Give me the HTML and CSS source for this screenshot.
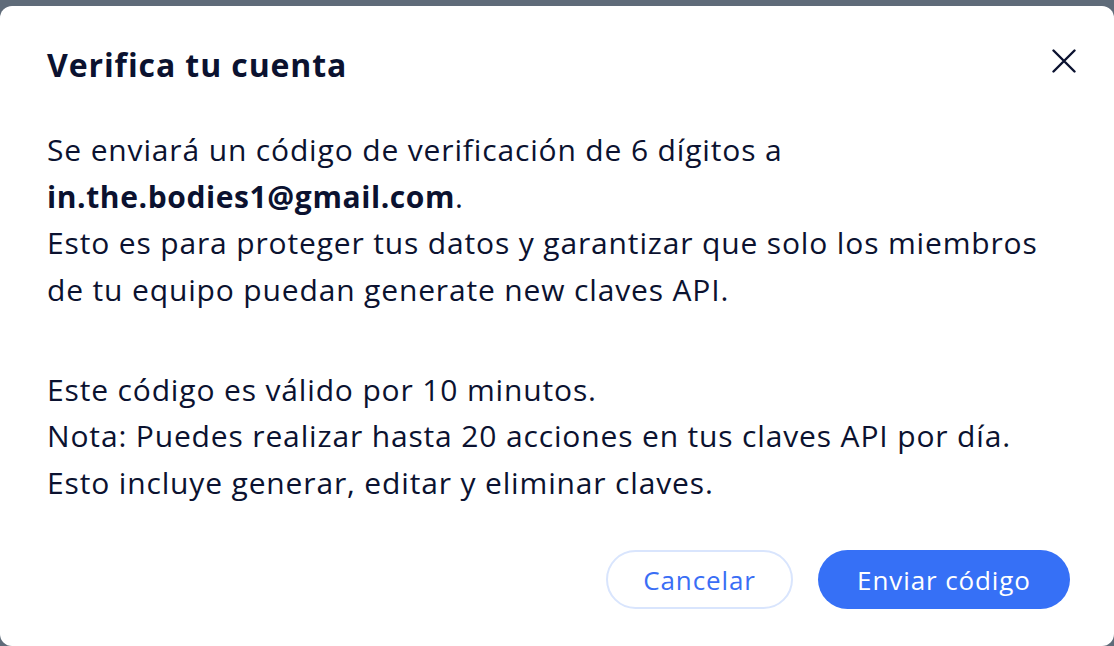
FILE: index.html
```html
<!DOCTYPE html>
<html lang="es">
<head>
<meta charset="utf-8">
<title>Verifica tu cuenta</title>
<link rel="stylesheet" href="styles.css">
</head>
<body>
<div class="backdrop">
  <div class="modal">
    <div class="modal-header">
      <h1 class="title">Verifica tu cuenta</h1>
      <button class="close" aria-label="Cerrar">
        <svg width="24" height="24" viewBox="0 0 24 24"><path d="M1.5 1.5 L22.5 22.5 M22.5 1.5 L1.5 22.5" stroke="#0b1230" stroke-width="2.4" stroke-linecap="round" fill="none"/></svg>
      </button>
    </div>
    <div class="modal-body">
      <p>Se enviará un código de verificación de 6 dígitos a<br><strong>in.the.bodies1@gmail.com</strong>.<br>Esto es para proteger tus datos y garantizar que solo los miembros<br>de tu equipo puedan generate new claves API.</p>
      <p>Este código es válido por 10 minutos.<br>Nota: Puedes realizar hasta 20 acciones en tus claves API por día.<br>Esto incluye generar, editar y eliminar claves.</p>
    </div>
    <div class="modal-footer">
      <button class="btn btn-secondary">Cancelar</button>
      <button class="btn btn-primary">Enviar código</button>
    </div>
  </div>
</div>
</body>
</html>
```
FILE: styles.css
```css
html, body {
  margin: 0;
  padding: 0;
  height: 100%;
}
body {
  background: #5f6b79;
  font-family: "Open Sans", "Liberation Sans", sans-serif;
  color: #0b1230;
  overflow: hidden;
}
.backdrop {
  padding-top: 6px;
  height: 100%;
  box-sizing: border-box;
}
.modal {
  background: #ffffff;
  border-radius: 12px;
  height: 640px;
  box-sizing: border-box;
  padding: 0 38px 0 47px;
  display: flex;
  flex-direction: column;
}
.modal-header {
  display: flex;
  justify-content: space-between;
  align-items: center;
  height: 120px;
}
.title {
  margin: 0;
  font-size: 32px;
  font-weight: 700;
  letter-spacing: 0.9px;
  margin-top: -3px;
}
.close {
  background: none;
  border: none;
  padding: 0;
  width: 24px;
  height: 24px;
  cursor: pointer;
  margin-top: -10px;
}
.close svg { display: block; }
.modal-body {
  font-size: 30px;
  line-height: 46.5px;
  letter-spacing: 0.85px;
  margin-top: 1px;
}
.modal-body p {
  margin: 0 0 53.5px 0;
}
.modal-body p:last-child { margin-bottom: 0; }
.modal-body strong { font-weight: 700; letter-spacing: 0.6px; }
.modal-footer {
  display: flex;
  justify-content: flex-end;
  gap: 25px;
  margin-top: 44px;
  padding-right: 6px;
}
.btn {
  height: 59px;
  border-radius: 30px;
  font-family: inherit;
  font-size: 26px;
  letter-spacing: 0.9px;
  padding: 0;
  cursor: pointer;
}
.btn-secondary {
  width: 187px;
  background: #fff;
  border: 2px solid #d9e5fd;
  color: #3a6ef5;
}
.btn-primary {
  width: 252px;
  background: #3670f6;
  border: none;
  color: #fff;
}
```
